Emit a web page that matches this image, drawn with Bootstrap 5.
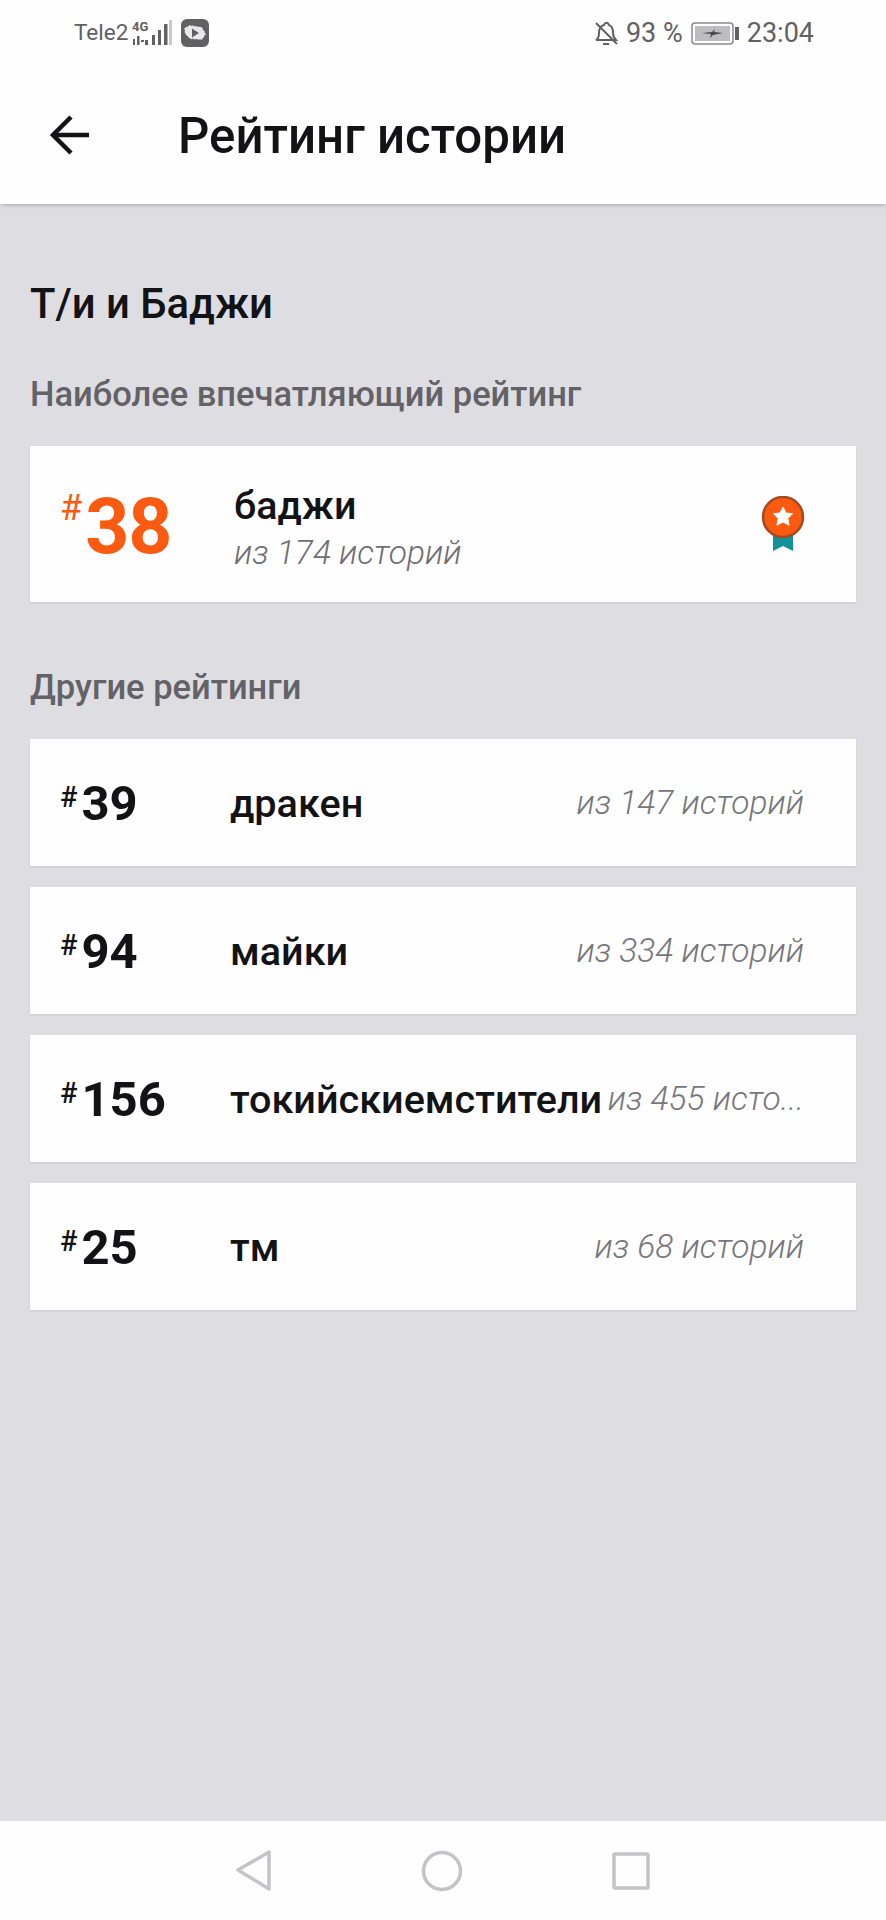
<!DOCTYPE html>
<html lang="ru">
<head>
  <meta charset="UTF-8" />
  <meta name="viewport" content="width=device-width, initial-scale=1.0"/>
  <title>Рейтинг истории</title>
  <link href="https://cdn.jsdelivr.net/npm/bootstrap@5.3.3/dist/css/bootstrap.min.css" rel="stylesheet" />
  <style>
    body {
      background-color: #dedde1;
      color: #131316;
      font-family: Roboto, "Liberation Sans", sans-serif;
    }

    .screen { height: 1920px; }

    .status-bar {
      height: 66px;
      background: #fffeff;
      color: #616165;
      font-size: 27px;
      padding: 0 72px 0 74px;
    }
    .carrier { font-size: 22.5px; }
    .signal-text { font-size: 13px; font-weight: 700; fill: #616165; font-family: Roboto, sans-serif; }

    .app-bar {
      height: 138px;
      background: #fffeff;
      box-shadow: 0 3px 4px -2px rgba(0, 0, 0, .25);
      padding-left: 49px;
      position: relative;
    }
    .app-title { font-size: 49.2px; font-weight: 500; margin: 4px 0 0 89px; line-height: 1; }

    .content { padding: 0 30px; }
    .block-title { font-size: 41.8px; font-weight: 500; margin: 78px 0 48px; line-height: 44px; }
    .block-sub { font-size: 34.5px; font-weight: 500; color: #636267; line-height: 40px; margin: 0 0 32px; }
    .block-sub-next { margin-top: 65px; }

    .rank-card {
      background: #fffeff;
      border: 0;
      border-radius: 0;
      box-shadow: 0 1px 2px rgba(0, 0, 0, .1);
    }
    .rank-main { height: 156px; padding: 0 51px 0 30px; }
    .rank-row { height: 127px; padding: 2px 52px 0 30px; margin-bottom: 21px; }

    .hash-main { font-size: 36px; color: #fb5a10; align-self: flex-start; line-height: 1; margin-top: 44px; }
    .num-main { font-size: 77px; font-weight: 700; color: #fb5a10; line-height: 1; letter-spacing: -1px; margin: 6px 0 0 3px; }
    .main-rank { width: 174px; }
    .main-text { padding-top: 10px; }
    .main-name { font-size: 39.4px; font-weight: 500; line-height: 47px; }
    .main-count { font-size: 33.5px; font-weight: 300; font-style: italic; color: #6f6e73; line-height: 47px; }

    .row-rank { width: 170px; flex-shrink: 0; }
    .hash-row { font-size: 29px; font-weight: 500; line-height: 1; align-self: flex-start; margin-top: 42px; }
    .num-row { font-size: 49px; font-weight: 700; line-height: 1; margin-left: 4px; }
    .row-name { font-size: 39.6px; font-weight: 500; flex-shrink: 0; white-space: nowrap; }
    .row-count {
      font-size: 33.5px;
      font-weight: 300;
      font-style: italic;
      color: #77767b;
      white-space: nowrap;
    }

    .nav-bar { height: 99px; background: #fffeff; padding-left: 236px; gap: 149px; }
  </style>
</head>
<body>
  <div class="screen d-flex flex-column">

    <!-- status bar -->
    <div class="status-bar d-flex align-items-center justify-content-between">
      <div class="d-flex align-items-center">
        <span class="carrier">Tele2</span>
        <svg class="ms-1" width="41" height="26" viewBox="0 0 41 26" fill="#616165">
          <text class="signal-text" x="0" y="11">4G</text>
          <rect x="1" y="19" width="2" height="6"/><rect x="5" y="16" width="2.500" height="9"/><rect x="9" y="20" width="3" height="2"/>
          <rect x="13" y="20" width="3" height="5"/><rect x="20" y="15" width="3" height="10"/>
          <rect x="26" y="10" width="3" height="15"/><rect x="32" y="4" width="3.500" height="21"/>
          <rect x="37" y="0" width="3" height="25" fill="#c9c8cb"/>
        </svg>
        <svg class="ms-2" width="28" height="28" viewBox="0 0 28 28">
          <rect x="0" y="0" width="28" height="28" rx="6" fill="#616165"/>
          <path d="M3 9l6-3 12 2 4 7-4 6-12-1-5-5z" fill="#e8e8e8" stroke="#616165" stroke-width="1" stroke-dasharray="2 1.500"/>
          <path d="M11 9.500l7 4.500-7 4.500z" fill="#616165"/>
        </svg>
      </div>
      <div class="d-flex align-items-center">
        <svg width="24" height="26" viewBox="0 0 24 26" fill="none" stroke="#616165" stroke-width="2">
          <path d="M2 20c2-1 3-3 3-7 0-4 2-7 5-8 1-3 4-3 5 0 3 1 4 4 4 8 0 3 1 5 3 7z"/><path d="M9 24h6"/><path d="M2 3l21 21"/>
        </svg>
        <span class="ms-2">93 %</span>
        <svg class="ms-2" width="48" height="23" viewBox="0 0 48 23">
          <rect x="1" y="1" width="41" height="21" rx="3" fill="none" stroke="#8a898d" stroke-width="1.500"/>
          <rect x="4" y="4" width="35" height="15" fill="#bdbcbf"/>
          <rect x="44" y="5" width="4" height="13" fill="#616165"/>
          <path d="M11 11l10-1 3-3-1 3 9 1-10 2-3 3 1-4z" fill="#47474a"/>
        </svg>
        <span class="ms-2">23:04</span>
      </div>
    </div>

    <!-- app bar -->
    <div class="app-bar d-flex align-items-center">
      <svg width="40" height="40" viewBox="0 0 40 40" fill="none" stroke="#131316" stroke-width="4.500">
        <path d="M40 20H4"/><path d="M22 2L4 20l18 18"/>
      </svg>
      <h1 class="app-title">Рейтинг истории</h1>
    </div>

    <!-- content -->
    <div class="content flex-grow-1">
      <h2 class="block-title">Т/и и Баджи</h2>
      <p class="block-sub">Наиболее впечатляющий рейтинг</p>

      <div class="card rank-card rank-main flex-row align-items-center">
        <div class="main-rank d-flex align-items-center h-100">
          <span class="hash-main">#</span>
          <span class="num-main">38</span>
        </div>
        <div class="main-text flex-grow-1">
          <div class="main-name">баджи</div>
          <div class="main-count">из 174 историй</div>
        </div>
        <svg width="44" height="56" viewBox="0 0 44 56">
          <path d="M12 32h20v23l-10-5-10 5z" fill="#14919b"/>
          <circle cx="22" cy="21" r="20" fill="#fb5a10" stroke="#a8481f" stroke-width="2.500"/>
          <path d="M22 11l2.900 6 6.600.700-4.700 4.800 1.300 6.700L22 26l-6.100 3.200 1.300-6.700-4.700-4.800 6.600-.700z" fill="#fff" stroke="#fff" stroke-width="1" stroke-linejoin="round"/>
        </svg>
      </div>

      <p class="block-sub block-sub-next">Другие рейтинги</p>

      <div>
        <div class="card rank-card rank-row flex-row align-items-center">
          <div class="row-rank d-flex align-items-center h-100"><span class="hash-row">#</span><span class="num-row">39</span></div>
          <div class="row-name">дракен</div>
          <div class="row-count ms-auto">из 147 историй</div>
        </div>
        <div class="card rank-card rank-row flex-row align-items-center">
          <div class="row-rank d-flex align-items-center h-100"><span class="hash-row">#</span><span class="num-row">94</span></div>
          <div class="row-name">майки</div>
          <div class="row-count ms-auto">из 334 историй</div>
        </div>
        <div class="card rank-card rank-row flex-row align-items-center">
          <div class="row-rank d-flex align-items-center h-100"><span class="hash-row">#</span><span class="num-row">156</span></div>
          <div class="row-name">токийскиемстители</div>
          <div class="row-count ms-auto">из 455 исто...</div>
        </div>
        <div class="card rank-card rank-row flex-row align-items-center">
          <div class="row-rank d-flex align-items-center h-100"><span class="hash-row">#</span><span class="num-row">25</span></div>
          <div class="row-name">тм</div>
          <div class="row-count ms-auto">из 68 историй</div>
        </div>
      </div>
    </div>

    <!-- system nav -->
    <div class="nav-bar d-flex align-items-center">
      <svg width="36" height="42" viewBox="0 0 36 42" fill="none" stroke="#c4c3c6" stroke-width="3.500" stroke-linejoin="round">
        <path d="M33 2L2 20l31 19z"/>
      </svg>
      <svg width="42" height="42" viewBox="0 0 42 42" fill="none" stroke="#c4c3c6" stroke-width="3.500">
        <circle cx="21" cy="21" r="18.500"/>
      </svg>
      <svg width="38" height="38" viewBox="0 0 38 38" fill="none" stroke="#c4c3c6" stroke-width="3.500" stroke-linejoin="round">
        <rect x="2" y="2" width="34" height="34" rx="1"/>
      </svg>
    </div>
  </div>
  <script src="https://cdn.jsdelivr.net/npm/bootstrap@5.3.3/dist/js/bootstrap.bundle.min.js"></script>
</body>
</html>
